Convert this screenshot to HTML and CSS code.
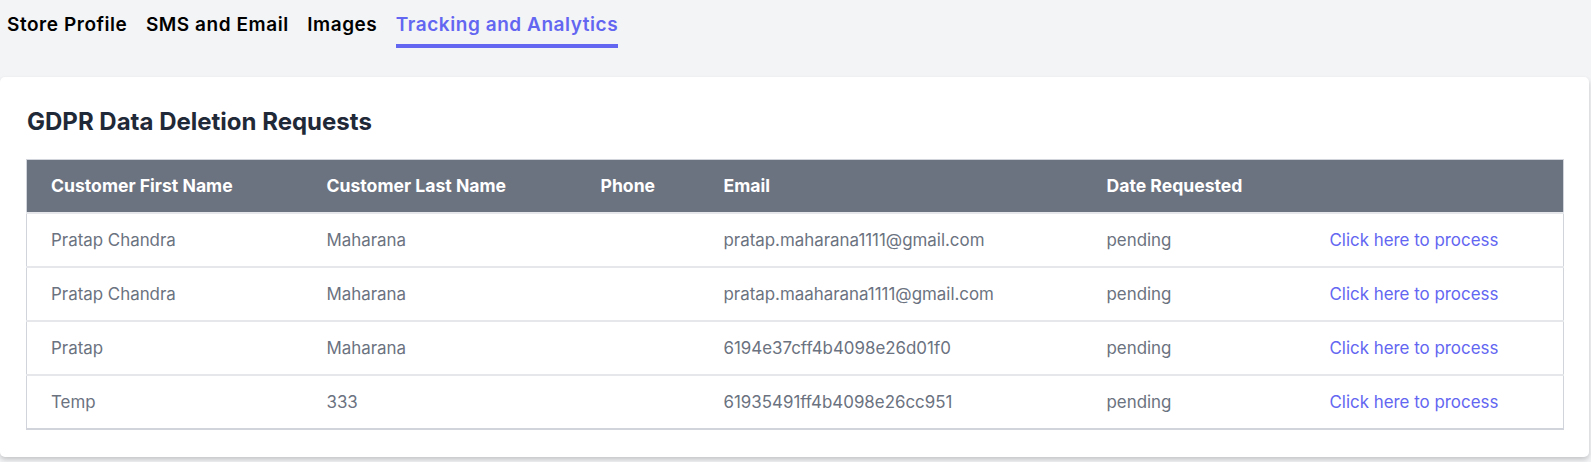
FILE: index.html
```html
<!DOCTYPE html>
<html lang="en">
<head>
<meta charset="utf-8">
<title>Settings - Tracking and Analytics</title>
<link rel="stylesheet" href="styles.css">
</head>
<body>
<nav class="tabs">
  <a class="tab">Store Profile</a>
  <a class="tab">SMS and Email</a>
  <a class="tab">Images</a>
  <a class="tab active">Tracking and Analytics</a>
</nav>
<section class="card">
  <h2 class="title">GDPR Data Deletion Requests</h2>
  <table class="requests">
    <thead>
      <tr>
        <th class="c-first">Customer First Name</th>
        <th class="c-last">Customer Last Name</th>
        <th class="c-phone">Phone</th>
        <th class="c-email">Email</th>
        <th class="c-date">Date Requested</th>
        <th class="c-action"></th>
      </tr>
    </thead>
    <tbody>
      <tr>
        <td>Pratap Chandra</td>
        <td>Maharana</td>
        <td></td>
        <td>pratap.maharana1111@gmail.com</td>
        <td>pending</td>
        <td><a class="process">Click here to process</a></td>
      </tr>
      <tr>
        <td>Pratap Chandra</td>
        <td>Maharana</td>
        <td></td>
        <td>pratap.maaharana1111@gmail.com</td>
        <td>pending</td>
        <td><a class="process">Click here to process</a></td>
      </tr>
      <tr>
        <td>Pratap</td>
        <td>Maharana</td>
        <td></td>
        <td>6194e37cff4b4098e26d01f0</td>
        <td>pending</td>
        <td><a class="process">Click here to process</a></td>
      </tr>
      <tr>
        <td>Temp</td>
        <td>333</td>
        <td></td>
        <td>61935491ff4b4098e26cc951</td>
        <td>pending</td>
        <td><a class="process">Click here to process</a></td>
      </tr>
    </tbody>
  </table>
</section>
</body>
</html>
```
FILE: styles.css
```css
* { box-sizing: border-box; }
html, body {
  margin: 0;
  padding: 0;
  background: #f3f4f6;
  font-family: Inter, "Noto Sans", sans-serif;
}
body { height: 462px; overflow: hidden; }

.tabs {
  display: flex;
  gap: 18.5px;
  padding: 11px 0 0 7px;
  height: 77px;
}
.tab {
  font-size: 19px;
  font-weight: 600;
  line-height: 28px;
  color: #000;
  letter-spacing: 0.55px;
  height: 37px;
  cursor: pointer;
}
.tab.active {
  color: #6366f1;
  border-bottom: 4px solid #6366f1;
}

.card {
  background: #fff;
  margin-right: 2px;
  height: 380px;
  border-radius: 5px;
  box-shadow: 0 2px 4px rgba(0,0,0,0.12), 0 4px 6px rgba(0,0,0,0.08);
  padding: 29px 25px 0 26px;
}
.title {
  margin: 0 0 21px 1px;
  font-size: 24px;
  line-height: 32px;
  font-weight: 700;
  color: #1f2937;
}

.requests {
  width: 100%;
  border-collapse: collapse;
  border: 1px solid #d1d5db;
  border-bottom-width: 2px;
  font-size: 16.9px;
  line-height: 24px;
  text-align: left;
}
.requests th {
  background: #6b7280;
  color: #fff;
  font-size: 17.6px;
  font-weight: 700;
  padding: 14px 24px;
  white-space: nowrap;
}
.requests td {
  color: #6b7280;
  padding: 14px 24px;
  border-top: 2px solid #e5e7eb;
  white-space: nowrap;
}
.c-first { width: 276px; }
.c-last { width: 274px; }
.c-phone { width: 123px; }
.c-email { width: 383px; }
.c-date { width: 223px; }
.process {
  color: #6366f1;
  cursor: pointer;
}
```
